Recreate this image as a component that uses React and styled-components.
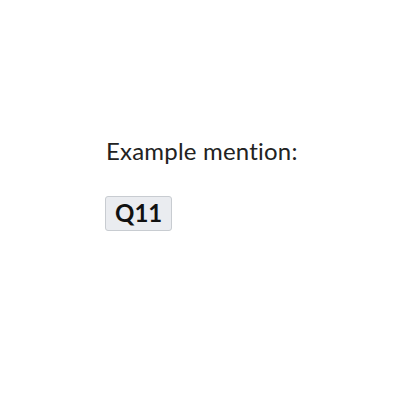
import styled, { createGlobalStyle } from "styled-components";

const GlobalStyle = createGlobalStyle`
    html, body {
        margin: 0;
        padding: 0;
        background: #fff;
    }
    body {
        font-family: Lato, "Liberation Sans", sans-serif;
        font-variant-ligatures: none;
        color: #222;
    }
`;

const Page = styled.div`
    width: 400px;
    height: 400px;
    display: flex;
    flex-direction: column;
    align-items: flex-start;
    padding: 137px 0 0 106px;
    box-sizing: border-box;
`;

const Label = styled.p`
    margin: 0 0 31px;
    font-size: 24px;
    line-height: 28px;
    letter-spacing: 0.2px;
    color: #222;
`;

const Mention = styled.span`
    display: inline-block;
    margin-left: -1px;
    padding: 4px 9px 5px;
    font-size: 24px;
    font-weight: 700;
    line-height: 24px;
    color: #111;
    background: #eaecf0;
    border: 1px solid #c8ccd1;
    border-radius: 3px;
`;

function App() {
    return (
        <>
            <GlobalStyle />
            <Page>
                <Label>Example mention:</Label>
                <Mention>Q11</Mention>
            </Page>
        </>
    );
}

export default App;
